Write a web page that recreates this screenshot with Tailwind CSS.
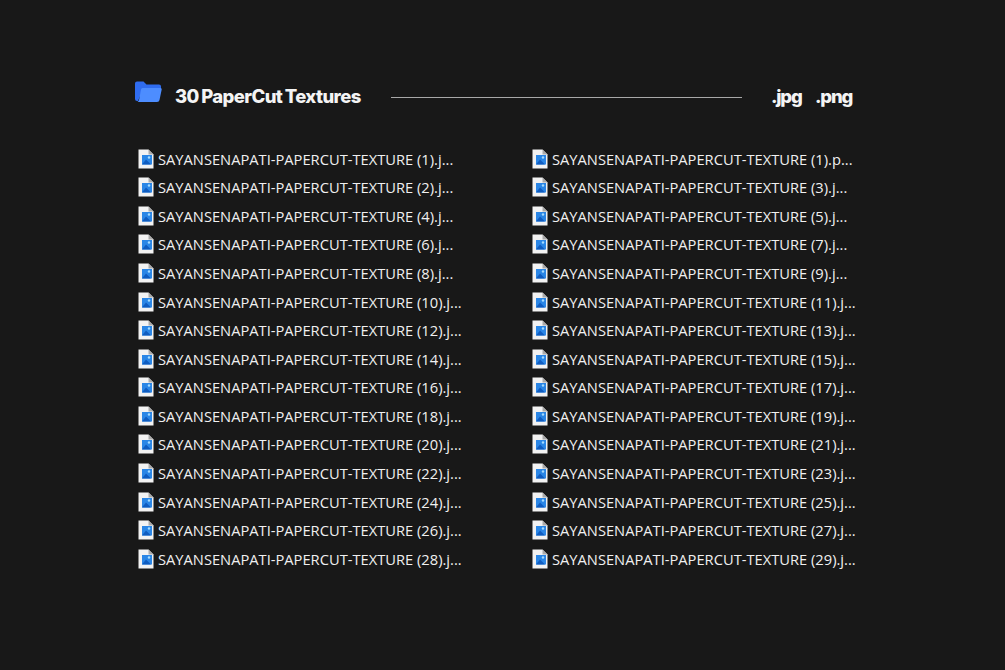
<!DOCTYPE html>
<html lang="en">
<head>
<meta charset="UTF-8">
<title>30 PaperCut Textures</title>
<script src="https://cdn.jsdelivr.net/npm/@tailwindcss/browser@4"></script>
</head>
<body class="bg-[#181818] w-[1005px] h-[670px] overflow-hidden font-['Open_Sans',sans-serif]">
<div class="pl-[135px] pt-[83px]">
  <!-- Header -->
  <div class="flex items-center h-[26px] font-['Inter',sans-serif] font-extrabold text-[18.5px] tracking-[-0.6px] [word-spacing:-1px] text-[#f4f4f4]">
    <svg class="w-[27px] h-[22px] -mt-[8px]" viewBox="0 0 27 22">
      <path d="M0 2.500Q0 0.500 2 0.500H8.500L11.500 3.500H24Q26 3.500 26 5.500V8H8L3 20H2Q0 20 0 18Z" fill="#2f6cf0"/>
      <path d="M7.500 7H25.500Q27 7 26.700 8.500L24.500 19Q24.200 21 22 21H2.500Q3.500 20.500 4 19L6 8.500Q6.300 7 7.500 7Z" fill="#4d8dff"/>
    </svg>
    <span class="ml-[13px] mt-[1px] w-[216px]">30 PaperCut Textures</span>
    <div class="w-[351px] h-px bg-[#a8a8a8] mt-[2px]"></div>
    <span class="ml-[29px] mt-[1px] w-[44px] tracking-[-1.2px]">.jpg</span>
    <span class="mt-[1px] tracking-[-1.2px]">.png</span>
  </div>
  <!-- Files -->
  <div id="files" class="grid grid-cols-[394px_330px] mt-[35.5px] pl-[3px] text-[14.7px] text-[#f0f0f0]"></div>
</div>
<script>
  const icon = `<svg class="w-[16px] h-[20px] shrink-0" viewBox="0 0 16 20">
    <path d="M0.500 0.500H10.500L15.500 5.500V19.500H0.500Z" fill="#f2f2f2"/>
    <path d="M10.500 0.500V5.500H15.500Z" fill="#a9a9a9"/>
    <rect x="4" y="6" width="10" height="9.500" fill="#2a86e6"/>
    <path d="M4 15.500L8 10.500L13 15.500Z" fill="#0f5cc0"/>
    <circle cx="11" cy="8.500" r="1.200" fill="#a5dcff"/>
  </svg>`;
  const left = ['1', '2', '4', '6', '8', '10', '12', '14', '16', '18', '20', '22', '24', '26', '28'];
  const right = ['1', '3', '5', '7', '9', '11', '13', '15', '17', '19', '21', '23', '25', '27', '29'];
  let html = '';
  left.forEach((n, i) => {
    const ext = i === 0 ? 'p' : 'j';
    html += `<div class="flex items-center h-[28.57px] gap-[4px] whitespace-nowrap">${icon}<span>SAYANSENAPATI-PAPERCUT-TEXTURE (${n}).j...</span></div>`;
    html += `<div class="flex items-center h-[28.57px] gap-[4px] whitespace-nowrap">${icon}<span>SAYANSENAPATI-PAPERCUT-TEXTURE (${right[i]}).${ext}...</span></div>`;
  });
  document.getElementById('files').innerHTML = html;
</script>
</body>
</html>
